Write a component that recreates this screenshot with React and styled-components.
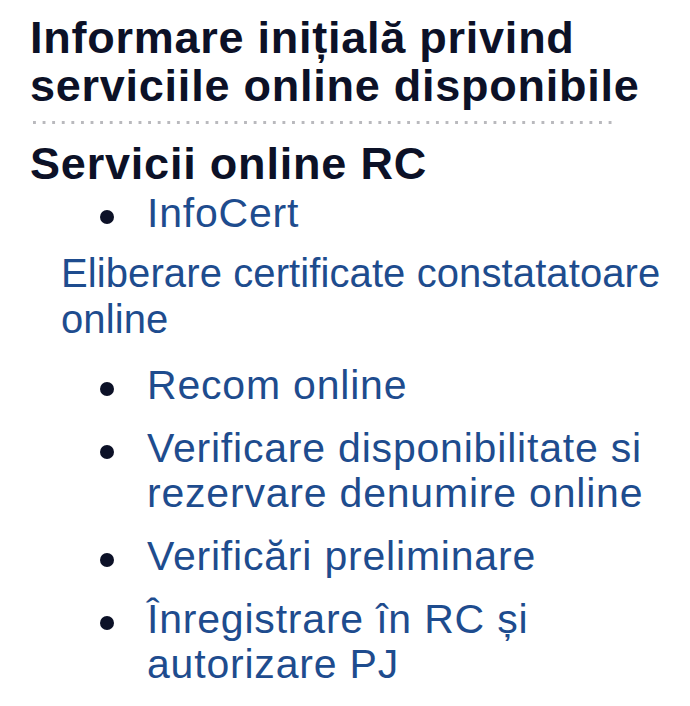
import React from 'react';
import styled, { createGlobalStyle } from 'styled-components';

const GlobalStyle = createGlobalStyle`
  body {
    margin: 0;
    background: #ffffff;
    font-family: "Liberation Sans", Arial, Helvetica, sans-serif;
  }
`;

const links = [
  'Recom online',
  'Verificare disponibilitate si rezervare denumire online',
  'Verificări preliminare',
  'Înregistrare în RC și autorizare PJ',
];

const App = () => {
  return (
    <Page>
      <GlobalStyle />
      <Title>Informare inițială privind serviciile online disponibile</Title>
      <Divider />
      <SectionTitle>Servicii online RC</SectionTitle>

      <LinkList>
        <Item>
          <Dot />
          <LinkText href="#">InfoCert</LinkText>
        </Item>
      </LinkList>

      <Note href="#">Eliberare certificate constatatoare online</Note>

      <LinkList $spaced>
        {links.map((label) => (
          <Item key={label}>
            <Dot />
            <LinkText href="#">{label}</LinkText>
          </Item>
        ))}
      </LinkList>
    </Page>
  );
};

const Page = styled.div`
  padding: 14px 4px 0 30px;
  color: #0c1127;
`;

const Title = styled.h1`
  margin: 0;
  font-size: 45px;
  line-height: 48px;
  font-weight: 700;
  letter-spacing: 0.75px;
  color: #0c1127;
`;

const Divider = styled.div`
  width: 580px;
  height: 3px;
  margin: 11px 0 0 3px;
  background-image: linear-gradient(to right, #b9b9bd 3px, transparent 3px);
  background-size: 9.6px 3px;
  background-repeat: repeat-x;
`;

const SectionTitle = styled.h2`
  margin: 16px 0 0;
  font-size: 45px;
  line-height: 48px;
  font-weight: 700;
  letter-spacing: 0.8px;
  color: #0c1127;
`;

const LinkList = styled.ul`
  list-style: none;
  margin: ${(p) => (p.$spaced ? '21px 0 0 70px' : '3px 0 0 70px')};
  padding: 0;
  display: flex;
  flex-direction: column;
  gap: 18px;
`;

const Item = styled.li`
  display: flex;
  align-items: flex-start;
`;

const Dot = styled.span`
  flex: none;
  width: 14px;
  height: 14px;
  margin: 19px 33px 0 0;
  border-radius: 50%;
  background: #0c1127;
`;

const LinkText = styled.a`
  font-size: 41px;
  line-height: 45px;
  letter-spacing: 0.8px;
  color: #1e4c8e;
  text-decoration: none;
`;

const Note = styled.a`
  display: block;
  margin: 14px 0 0 31px;
  font-size: 40px;
  line-height: 46px;
  letter-spacing: 0.1px;
  color: #1e4c8e;
  text-decoration: none;
`;

export default App;
